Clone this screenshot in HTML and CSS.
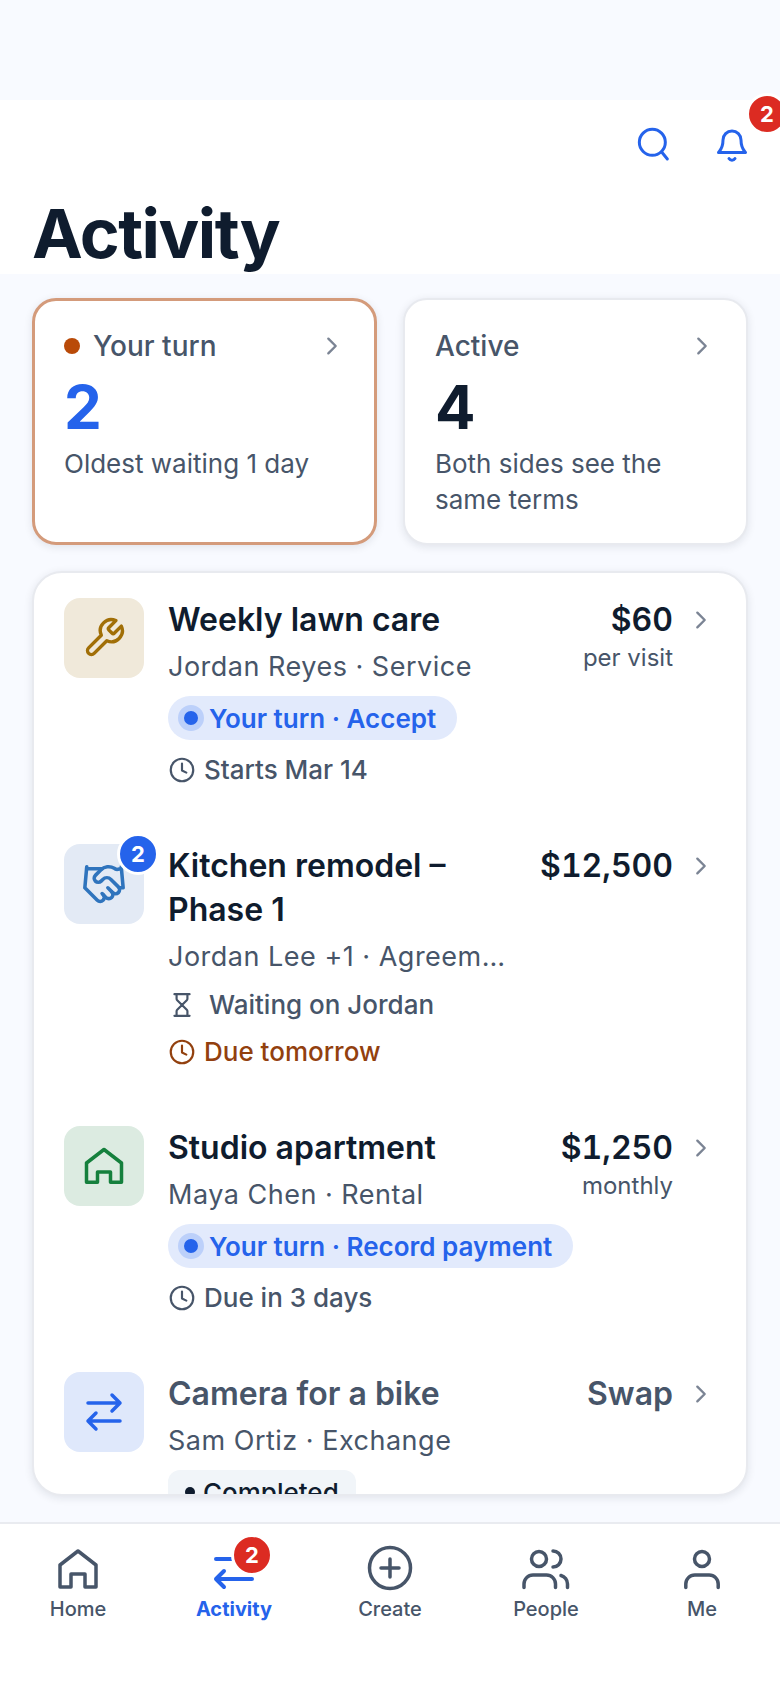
FILE: index.html
```html
<!DOCTYPE html>
<html lang="en">
<head>
<meta charset="utf-8">
<title>Activity</title>
<link rel="stylesheet" href="styles.css">
</head>
<body>
<svg class="defs" aria-hidden="true">
  <symbol id="chev" viewBox="0 0 24 24"><path d="m8 4 8 8-8 8"/></symbol>
  <symbol id="clock" viewBox="0 0 24 24"><circle cx="12" cy="12" r="10.400"/><path d="M12 6v6.400l4 2"/></symbol>
</svg>
<div class="status"></div>
<header class="header">
  <div class="top-actions">
    <button class="icon-btn"><svg class="ico-40" viewBox="0 0 24 24"><circle cx="11" cy="11" r="7.800"/><path d="m16.600 16.800 3.400 4.200"/></svg></button>
    <button class="icon-btn"><svg class="ico-40 ico-bell" viewBox="0 0 40 40"><path d="M6.500 28.500C8 26.500 11 24 11 16a9 9 0 0 1 18 0c0 8 3 10.500 4.500 12.500z"/><path d="M17 34.500a3.500 3.500 0 0 0 6 0"/></svg><span class="badge badge-red badge-bell">2</span></button>
  </div>
  <h1 class="title">Activity</h1>
</header>
<main class="content">
  <section class="stats">
    <a class="stat stat-turn">
      <div class="stat-head"><span class="stat-dot"></span><span class="stat-label">Your turn</span><svg class="chev"><use href="#chev"/></svg></div>
      <div class="stat-num num-blue">2</div>
      <p class="stat-sub">Oldest waiting 1 day</p>
    </a>
    <a class="stat">
      <div class="stat-head"><span class="stat-label">Active</span><svg class="chev"><use href="#chev"/></svg></div>
      <div class="stat-num">4</div>
      <p class="stat-sub">Both sides see the same terms</p>
    </a>
  </section>
  <section class="list">
    <article class="row">
      <div class="thumb thumb-amber"><svg class="ico-44" viewBox="0 0 24 24"><path d="M14.700 6.300a1 1 0 0 0 0 1.400l1.600 1.600a1 1 0 0 0 1.400 0l3.770-3.770a6 6 0 0 1-7.940 7.940l-6.910 6.910a2.120 2.120 0 0 1-3-3l6.910-6.910a6 6 0 0 1 7.940-7.940l-3.760 3.760z"/></svg></div>
      <div class="main">
        <h2 class="name">Weekly lawn care</h2>
        <p class="sub">Jordan Reyes · Service</p>
        <div class="pill"><span class="pulse"></span>Your turn · Accept</div>
        <p class="meta"><svg class="ico-26"><use href="#clock"/></svg>Starts Mar 14</p>
      </div>
      <div class="amount"><div class="price">$60</div><div class="per">per visit</div></div>
      <svg class="chev chev-row"><use href="#chev"/></svg>
    </article>
    <article class="row">
      <div class="thumb thumb-blue"><svg class="ico-46" viewBox="0 0 24 24"><path d="m11 17 2 2a1 1 0 1 0 3-3"/><path d="m14 14 2.500 2.500a1 1 0 1 0 3-3l-3.880-3.880a3 3 0 0 0-4.240 0l-.88.88a1 1 0 1 1-3-3l2.810-2.810a5.790 5.790 0 0 1 7.060-.87l.47.28a2 2 0 0 0 1.420.25L21 4"/><path d="m21 3 1 11h-2"/><path d="M3 3 2 14l6.500 6.500a1 1 0 1 0 3-3"/><path d="M3 4h8"/></svg><span class="badge badge-blue badge-thumb">2</span></div>
      <div class="main">
        <h2 class="name">Kitchen remodel – Phase 1</h2>
        <p class="sub">Jordan Lee +1 · Agreement</p>
        <p class="meta meta-wait"><svg class="ico-26" viewBox="0 0 24 24"><path d="M5 22h14"/><path d="M5 2h14"/><path d="M17 22v-4.200a2 2 0 0 0-.59-1.400L12 12l-4.410 4.400a2 2 0 0 0-.59 1.400V22"/><path d="M7 2v4.200a2 2 0 0 0 .59 1.400L12 12l4.410-4.400a2 2 0 0 0 .59-1.400V2"/></svg>Waiting on Jordan</p>
        <p class="meta meta-due"><svg class="ico-26"><use href="#clock"/></svg>Due tomorrow</p>
      </div>
      <div class="amount"><div class="price">$12,500</div></div>
      <svg class="chev chev-row"><use href="#chev"/></svg>
    </article>
    <article class="row">
      <div class="thumb thumb-green"><svg class="ico-48" viewBox="0 0 48 48"><path class="thick" d="M6.500 21 24 7.500 41.500 21v19.300h-11V30h-13v10.300h-11z"/></svg></div>
      <div class="main">
        <h2 class="name">Studio apartment</h2>
        <p class="sub">Maya Chen · Rental</p>
        <div class="pill"><span class="pulse"></span>Your turn · Record payment</div>
        <p class="meta"><svg class="ico-26"><use href="#clock"/></svg>Due in 3 days</p>
      </div>
      <div class="amount"><div class="price">$1,250</div><div class="per">monthly</div></div>
      <svg class="chev chev-row"><use href="#chev"/></svg>
    </article>
    <article class="row row-done">
      <div class="thumb thumb-swap"><svg class="ico-48" viewBox="0 0 48 48"><path class="thick" d="M8 15h32M32 7l8 8-8 8M40 33H8M16 25l-8 8 8 8"/></svg></div>
      <div class="main">
        <h2 class="name">Camera for a bike</h2>
        <p class="sub">Sam Ortiz · Exchange</p>
        <div class="pill pill-done"><span class="done-dot"></span>Completed</div>
      </div>
      <div class="amount"><div class="price">Swap</div></div>
      <svg class="chev chev-row"><use href="#chev"/></svg>
    </article>
  </section>
</main>
<nav class="nav">
  <a class="tab"><svg class="ico-52" viewBox="0 0 52 52"><path d="M8 22 26 8l18 14v22H33V31H19v13H8z"/></svg><span>Home</span></a>
  <a class="tab tab-active"><svg class="ico-52" viewBox="0 0 52 52"><path d="M8 16h36M36 8l8 8-8 8M44 36H8M16 28l-8 8 8 8"/></svg><span>Activity</span><span class="badge badge-red badge-tab">2</span></a>
  <a class="tab"><svg class="ico-52" viewBox="0 0 52 52"><circle cx="26" cy="25" r="20.500"/><path d="M26 16v18M17 25h18"/></svg><span>Create</span></a>
  <a class="tab"><svg class="ico-52" viewBox="0 0 52 52"><circle cx="19" cy="16" r="7.500"/><path d="M4 44.500V41a9 9 0 0 1 9-9h13.500a9 9 0 0 1 9 9v3.500"/><path d="M33 8a8 8 0 0 1 0 16"/><path d="M41 32.500a9 9 0 0 1 6.500 8.500v3.500"/></svg><span>People</span></a>
  <a class="tab"><svg class="ico-52" viewBox="0 0 52 52"><circle cx="26" cy="16" r="7.500"/><path d="M9.800 44.500V41a9 9 0 0 1 9-9h14.400a9 9 0 0 1 9 9v3.500"/></svg><span>Me</span></a>
</nav>
</body>
</html>
```
FILE: styles.css
```css
* { box-sizing: border-box; }
html, body { margin: 0; padding: 0; }
body {
  width: 780px;
  height: 1688px;
  overflow: hidden;
  display: flex;
  flex-direction: column;
  background: #f8faff;
  color: #0f1c2e;
  font-family: Inter, "Noto Sans", sans-serif;
}
h1, h2, p { margin: 0; font-weight: inherit; }
svg { fill: none; stroke: currentColor; stroke-linecap: round; stroke-linejoin: round; stroke-width: 2; display: block; flex: none; }
.defs { width: 0; height: 0; position: absolute; }

.status { height: 100px; flex: none; }

.header { background: #fff; flex: none; height: 174px; padding: 24px 0 0 32px; }
.top-actions { display: flex; justify-content: flex-end; gap: 38px; padding-right: 28px; }
.icon-btn { width: 40px; height: 40px; padding: 0; border: 0; background: none; color: #2563eb; position: relative; font: inherit; }
.ico-40 { width: 40px; height: 40px; stroke-width: 1.8; }
.ico-bell { stroke-width: 3; }
.title { margin-top: 28px; font-size: 68px; line-height: 83px; font-weight: 700; letter-spacing: -1.5px; }

.badge { position: absolute; width: 42px; height: 42px; border: 3px solid #fff; border-radius: 50%; display: flex; align-items: center; justify-content: center; color: #fff; font-size: 22px; font-weight: 700; }
.badge-red { background: #dc2b22; }
.badge-blue { background: #2563eb; }
.badge-bell { left: 34px; top: -31px; }
.badge-thumb { left: 53px; top: -11px; }
.badge-tab { left: 75px; top: 10px; }

.content { flex: 1; min-height: 0; padding: 24px 32px 26px; display: flex; flex-direction: column; gap: 26px; }

.stats { display: grid; grid-template-columns: 1fr 1fr; gap: 26px; flex: none; }
.stat { background: #fff; border: 2px solid #e8eaef; border-radius: 24px; padding: 28px 33px 25px 30px; box-shadow: 0 2px 8px rgba(15, 28, 46, .1); height: 247px; }
.stat-turn { border: 3px solid #d49b7b; padding: 27px 31px 24px 29px; }
.stat-head { display: flex; align-items: center; height: 36px; gap: 13px; }
.stat-dot { width: 16px; height: 16px; border-radius: 50%; background: #b94a08; }
.stat-label { flex: 1; font-size: 28px; font-weight: 500; color: #475569; }
.chev { width: 22px; height: 22px; color: #7b8494; stroke-width: 2.6; }
.stat-num { margin-top: 4px; font-size: 60px; line-height: 78px; font-weight: 700; }
.num-blue { color: #2563eb; }
.stat-sub { font-size: 26px; line-height: 36px; color: #475569; }

.list { flex: 1; min-height: 0; overflow: hidden; background: #fff; border: 2px solid #e8eaef; border-radius: 30px; box-shadow: 0 2px 8px rgba(15, 28, 46, .1); padding: 25px 34px 0 30px; display: flex; flex-direction: column; gap: 56px; }
.row { display: flex; align-items: flex-start; flex: none; }
.thumb { width: 80px; height: 80px; border-radius: 16px; display: flex; align-items: center; justify-content: center; flex: none; position: relative; }
.thumb-amber { background: #f0e9da; color: #a16f07; }
.thumb-blue { background: #e3eaf5; color: #2f74bd; }
.thumb-green { background: #dcebe1; color: #15803d; }
.thumb-swap { background: #dfe8fb; color: #2563eb; }
.ico-44 { width: 44px; height: 44px; stroke-width: 1.85; }
.ico-46 { width: 46px; height: 46px; stroke-width: 1.85; }
.ico-48 { width: 48px; height: 48px; }
.ico-48 .thick { stroke-width: 3.5; }
.main { flex: 1; min-width: 0; margin-left: 24px; }
.name { font-size: 32px; line-height: 44px; font-weight: 600; }
.sub { margin-top: 5px; font-size: 27px; line-height: 40px; color: #475569; letter-spacing: .5px; white-space: nowrap; overflow: hidden; text-overflow: ellipsis; }
.pill { margin-top: 9px; display: inline-flex; align-items: center; height: 44px; padding: 0 21px 0 10px; gap: 5px; border-radius: 22px; background: #e2eafc; color: #2563eb; font-size: 26px; font-weight: 600; white-space: nowrap; }
.pulse { width: 26px; height: 26px; border-radius: 50%; background: #2563eb; border: 6px solid #bcd0fa; }
.pill-done { padding: 0 17px; gap: 8px; border-radius: 12px; background: #f1f5f9; color: #0f1c2e; font-weight: 500; }
.done-dot { width: 10px; height: 10px; border-radius: 50%; background: #0f1c2e; }
.meta { margin-top: 12px; padding-left: 1px; display: flex; align-items: center; gap: 9px; font-size: 26px; line-height: 36px; font-weight: 500; color: #475569; white-space: nowrap; }
.meta-wait { margin-top: 10px; gap: 14px; }
.meta-due { margin-top: 11px; color: #92400e; }
.ico-26 { width: 26px; height: 26px; }
.amount { margin-left: 32px; text-align: right; flex: none; }
.price { font-size: 32px; line-height: 44px; font-weight: 600; font-variant-numeric: tabular-nums; }
.per { margin-top: 1px; font-size: 24px; line-height: 30px; color: #475569; }
.chev-row { margin: 11px 0 0 17px; }
.row-done .name, .row-done .price { color: #475569; }

.nav { flex: none; height: 166px; background: #fff; border-top: 2px solid #e9ebf0; display: grid; grid-template-columns: repeat(5, 156px); }
.tab { display: flex; flex-direction: column; align-items: center; color: #475569; font-size: 20px; line-height: 28px; font-weight: 500; padding-top: 19px; position: relative; }
.ico-52 { width: 52px; height: 52px; stroke-width: 3.5; }
.tab-active { color: #2563eb; font-weight: 700; }
.tab-active .ico-52 { stroke-width: 4; }
```
